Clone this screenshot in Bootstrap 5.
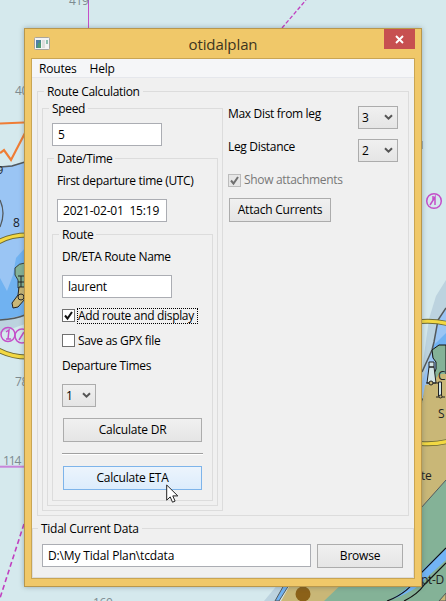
<!DOCTYPE html>
<html lang="en">
<head>
<meta charset="utf-8">
<meta name="viewport" content="width=device-width, initial-scale=1">
<title>otidalplan</title>
<link href="https://cdn.jsdelivr.net/npm/bootstrap@5.3.0/dist/css/bootstrap.min.css" rel="stylesheet">
<style>
html, body { height: 601px; overflow: hidden; }
body { background: #d5e9ed; font-family: "Open Sans", "Noto Sans", sans-serif; font-size: 12px; line-height: 16px; color: #000; letter-spacing: -.32px; }
.chart { position: absolute; left: 0; top: 0; }
.win { width: 398px; height: 559px; margin: 28px 0 0 24px; background: #f0c869; border: 1px solid #b8974c; box-shadow: 0 0 5px rgba(60,80,90,.4); }
.title-bar { height: 29px; padding-left: 9px; }
.title-text { font-size: 15px; line-height: 20px; color: #3d3520; letter-spacing: -.1px; margin-top: 5px; padding-left: 12px; }
.close-btn { width: 31px; height: 20px; background: #c75050; border: 0; border-radius: 0; padding: 0; margin-right: 6px; display: block; }
.client { margin: 0 6px; height: 521px; border: 1px solid #c9a553; background: #f0f0f0; }
.menu-strip { height: 19px; background: #f5f6f8; border-bottom: 1px solid #e5e7ec; padding-left: 7px; letter-spacing: -.2px; }
.menu-strip .nav-link { color: #000; padding: 0; line-height: 20px; margin-right: 13px; }
.group { border: 1px solid #dcdcdc; }
.group > .cap { display: block; width: max-content; height: 16px; margin: -8px 0 0 6px; padding: 0 3px; background: #f0f0f0; white-space: nowrap; }
.g-calc { margin: 13px 0 0 5px; width: 372px; height: 425px; }
.g-speed { width: 181px; height: 403px; margin: 8px 0 0 4px; }
.g-date { width: 171px; height: 348px; margin: 12px 0 0 4px; }
.g-route { width: 161px; height: 267px; margin: 12px 0 0 4px; }
.g-tidal { width: 382px; height: 50px; margin-top: 12px; }
.field { width: 110px; height: 23px; border: 1px solid #abadb3; border-radius: 0; background: #fff; color: #000; font-size: 12px; line-height: 16px; padding: 0 5px 1px; letter-spacing: -.2px; }
.push-btn, .drop { border: 1px solid #acacac; border-radius: 0; background: linear-gradient(#f0f0f0, #e5e5e5); color: #000; font-size: 12px; line-height: 16px; padding: 0; letter-spacing: -.22px; }
.push-btn { height: 24px; display: block; }
.push-btn.hot, .push-btn.hot:hover { border-color: #7eb4ea; background: linear-gradient(#ecf4fc, #dcecfc); }
.drop { width: 40px; height: 23px; padding: 0 4px 0 3px; }
.tick { width: 13px; height: 13px; border: 1px solid #707070; background: #fff; flex: none; }
.tick svg { display: block; }
.tick.off { border-color: #bcbcbc; background: #e6e6e6; }
.lbl { height: 16px; white-space: nowrap; }
.focus { border: 1px dotted #000; width: 121px; height: 16px; line-height: 14px; margin-left: 2px; white-space: nowrap; }
.sep { height: 2px; border-top: 1px solid #a0a0a0; border-bottom: 1px solid #fff; width: 141px; margin-top: 11px; }
.pointer { position: absolute; left: 166px; top: 484px; }
.in-speed { margin: 6px 0 0 9px; }
.l-first { margin: 6px 0 0 9px; }
.in-date { margin: 10px 0 0 9px; }
.route-body { padding: 6px 0 0 9px; }
.in-name { margin-top: 10px; }
.row-add { margin-top: 9px; height: 17px; }
.row-gpx { margin-top: 8px; height: 17px; }
.l-gpx { padding-left: 3px; }
.l-dep { margin-top: 9px; }
.drop-sm { width: 34px; margin-top: 10px; }
.b-dr, .b-eta { width: 139px; margin: 11px 0 0 1px; }
.side { width: 170px; margin: 6px 0 0 5px; }
.row-leg { margin-top: 10px; }
.row-show { margin-top: 10px; height: 16px; color: #787878; }
.l-show { padding-left: 3px; }
.b-attach { width: 102px; margin: 10px 0 0 1px; }
.group > .cap-tidal { margin-left: 5px; letter-spacing: -.26px; }
.path-row { padding: 7px 0 0 9px; }
.in-path { width: 269px; letter-spacing: -.15px; }
.b-browse { width: 86px; margin-left: 6px; }
</style>
<script src="https://cdn.jsdelivr.net/npm/bootstrap@5.3.0/dist/js/bootstrap.bundle.min.js"></script>
</head>
<body>
<svg class="chart" width="446" height="601" font-family="Open Sans, sans-serif" font-size="12" fill="none">
  <path d="M88.500 0V30" stroke="#c44fc8"/>
  <text x="69" y="5" fill="#7d8b90">419</text><text x="15" y="95" fill="#7d8b90">40</text>
  <text x="15" y="386" fill="#7d8b90">78</text><text x="3" y="465" fill="#7d8b90" textLength="18">114</text><text x="93" y="607" fill="#7d8b90">160</text>
  <path d="M282 28L306 0" stroke="#c040c0" stroke-width="1.300" stroke-dasharray="4 2"/>
  <path d="M0 123.500L24 122.500" stroke="#ef7d35" stroke-width="1.800"/>
  <path d="M0 153l4-3 7 10 14-27" stroke="#ef7d35" stroke-width="2.200"/>
  <path d="M0 167l12-2 13-3V317L0 321z" fill="#9ac5f4"/>
  <path d="M0 167l12-1 13-4" stroke="#53595c" stroke-width="1.500"/>
  <text x="-3" y="174" fill="#222" font-size="11">9</text>
  <path d="M0 200q6 13 0 27" stroke="#53595c" stroke-width="1.300"/>
  <text x="13" y="227" fill="#182028" font-size="12">8</text>
  <path d="M0 278l7 13 6-16 3-17 9-10v68l-25 4z" fill="#70b2f1"/>
  <path d="M0 320l25-5v9l-25 9z" fill="#bcd3df"/>
  <path d="M0 320q16-1 25-5" stroke="#53595c" stroke-width="1.500"/>
  <path d="M25 263q-6 0-10 5v7l3 5v8h7z" fill="#84b297" stroke="#222" stroke-width=".8"/>
  <path d="M19 287h6v12l-7 8-5 1-1-5 6-8z" fill="#c9b777" stroke="#222"/>
  <path d="M18 276h7M18 282h7M21 276v11" stroke="#222"/><circle cx="21" cy="297" r="3" stroke="#222"/>
  <circle cx="27" cy="296" r="61" stroke="#6e6a35" stroke-width="5"/><circle cx="27" cy="296" r="61" stroke="#f2d843" stroke-width="3.200"/>
  <g stroke="#c44fc8" stroke-width="1.500"><circle cx="8" cy="334.500" r="7"/><circle cx="22" cy="336" r="7"/><path d="M6 332l3-2-1 9M6 339h5M19 340l5-8"/></g>
  <path d="M0 466.700h25" stroke="#c985da" stroke-width="2"/>
  <path d="M24 524L0 598" stroke="#c040c0" stroke-width="1.600" stroke-dasharray="5 3"/>

  <path d="M422 141v8" stroke="#9fb0b5" stroke-width="2"/>
  <g stroke="#c44fc8" stroke-width="1.500"><circle cx="434" cy="201" r="7.300"/><path d="M430 205l5-8v8M433 196v4"/></g>
  <path d="M446 280l-10 16-7 23-8 58v20h25z" fill="#bcd3df"/>
  <path d="M446 308l-8 12-4 22-12 40v30h24z" fill="#9ac5f4"/>
  <path d="M446 333l-14 14v10h14z" fill="#70b2f1"/>
  <path d="M446 308l-8 12-4 22-2 8-10 22" stroke="#53595c" stroke-width="1.500"/>
  <path d="M446 345h-7l-7 5 1 8 3 4v7l-5 12-10 22h25z" fill="#84b297" stroke="#111"/>
  <path d="M446 374h-7l-7 10-7 1-3 18v105l24-28z" fill="#c9b777"/>
  <path d="M446 480l-25 28v36l-37 42-15 15h77z" fill="#84b297"/>
  <path d="M446 480l-25 28" stroke="#53595c"/>
  <path d="M288 601l20-24h92l-60 10-15 14z" fill="#c9b777"/>
  <path d="M308 580h34l-17 21h-37z" fill="#c9b777"/><path d="M346 580h75v10l-20 11h-77z" fill="#84b297"/>
  <path d="M264 601l15-18h11l-15 18z" fill="#bcd3df"/><path d="M275 601l9-16h5l-10 16z" fill="#70b2f1" stroke="#53595c"/>
  <path d="M281 601l9-16h20v16z" fill="#c9b777"/>
  <path d="M388 601q28-10 35-20l23-21v-12l-25 23q-15 22-34 30z" fill="#72b4f5"/>
  <path d="M404 601q14-7 20-16l22-22M387 601q22-8 34-28l25-25" stroke="#111" stroke-width="1.200"/>
  <path d="M439 601l7-8v8z" fill="#c9b777" stroke="#53595c"/>
  <circle cx="303" cy="594" r="7.500" fill="#8b6118"/>
  <g stroke="#6e6a35" stroke-width="5"><path d="M421 321.500q14-1 26 2M421 443.500q14 1 26-2"/></g>
  <g stroke="#f2d843" stroke-width="3.200"><path d="M421 321.500q14-1 26 2M421 443.500q14 1 26-2"/></g>
  <g stroke="#222"><path d="M429 362h5v5h-5zM429 367h5l2 16h-9z" fill="#d3e5e6"/><path d="M426 383h13"/><circle cx="431" cy="383" r="2" fill="#c9b777"/><path d="M438.500 382h3v14h-3z" fill="#d3e5e6"/><path d="M436 397h9"/><circle cx="440.500" cy="396.500" r="1.500" fill="#c9b777"/></g>
  <g fill="#222" font-size="12"><text x="438" y="380">C</text><text x="438" y="418">S</text><text x="421" y="480">te</text><text x="421" y="584">pt-D</text></g>
</svg>

<main class="win position-relative">
  <header class="title-bar d-flex align-items-start">
    <svg class="mt-2" width="16" height="13" viewBox="0 0 16 13"><rect x=".5" y=".5" width="15" height="12" rx="1" fill="#f4f4f4" stroke="#a9a59c"/><path d="M2 3h5v8H2z" fill="#4a8a8c"/><path d="M2 3h3v5H2z" fill="#4d7fa8"/><path d="M4 6h3v5H4z" fill="#4f9b73"/><path d="M8 3h3v8H8z" fill="#dedede"/><path d="M12 3h2v4h-2z" fill="#8cc0b0"/></svg>
    <div class="title-text flex-grow-1 text-center">otidalplan</div>
    <button class="btn close-btn" aria-label="Close"><svg class="d-block mx-auto" width="9" height="9" viewBox="0 0 9 9"><path d="M1 1l7 7M8 1l-7 7" stroke="#fff" stroke-width="1.900"/></svg></button>
  </header>
  <div class="client">
    <nav class="menu-strip nav"><a class="nav-link">Routes</a><a class="nav-link">Help</a></nav>

    <section class="group g-calc"><span class="cap">Route Calculation</span>
      <div class="d-flex">
        <div>
          <section class="group g-speed"><span class="cap">Speed</span>
            <input class="field d-block in-speed" value="5" aria-label="Speed">
            <section class="group g-date"><span class="cap">Date/Time</span>
              <div class="lbl l-first">First departure time (UTC)</div>
              <input class="field d-block in-date" value="2021-02-01&nbsp; 15:19" aria-label="First departure time">
              <section class="group g-route"><span class="cap">Route</span>
                <div class="route-body">
                  <div class="lbl">DR/ETA Route Name</div>
                  <input class="field d-block in-name" value="laurent" aria-label="Route name">
                  <div class="d-flex align-items-center row-add"><span class="tick"><svg width="11" height="11"><path d="M2 5.500l2.500 3L9 2" fill="none" stroke="#111" stroke-width="2"/></svg></span><span class="focus">Add route and display</span></div>
                  <div class="d-flex align-items-center row-gpx"><span class="tick"></span><span class="lbl l-gpx">Save as GPX file</span></div>
                  <div class="lbl l-dep">Departure Times</div>
                  <div class="drop drop-sm d-flex align-items-center justify-content-between"><span>1</span><svg width="9" height="7"><path d="M1 1.200l3.500 3.500L8 1.200" fill="none" stroke="#555" stroke-width="2"/></svg></div>
                  <button class="btn push-btn b-dr">Calculate DR</button>
                  <div class="sep"></div>
                  <button class="btn push-btn hot b-eta">Calculate ETA</button>
                </div>
              </section>
            </section>
          </section>
        </div>
        <div class="side">
          <div class="d-flex justify-content-between"><span class="lbl">Max Dist from leg</span><div class="drop d-flex align-items-center justify-content-between"><span>3</span><svg width="9" height="7"><path d="M1 1.200l3.500 3.500L8 1.200" fill="none" stroke="#555" stroke-width="2"/></svg></div></div>
          <div class="d-flex justify-content-between row-leg"><span class="lbl">Leg Distance</span><div class="drop d-flex align-items-center justify-content-between"><span>2</span><svg width="9" height="7"><path d="M1 1.200l3.500 3.500L8 1.200" fill="none" stroke="#555" stroke-width="2"/></svg></div></div>
          <div class="d-flex align-items-center row-show"><span class="tick off"><svg width="11" height="11"><path d="M2 5.500l2.500 3L9 2" fill="none" stroke="#707070" stroke-width="2"/></svg></span><span class="lbl l-show">Show attachments</span></div>
          <button class="btn push-btn b-attach">Attach Currents</button>
        </div>
      </div>
    </section>

    <section class="group g-tidal"><span class="cap cap-tidal">Tidal Current Data</span>
      <div class="d-flex path-row"><input class="field in-path" value="D:\My Tidal Plan\tcdata" aria-label="Data folder"><button class="btn push-btn b-browse">Browse</button></div>
    </section>
  </div>
</main>
<svg class="pointer" width="13" height="20" viewBox="0 0 13 20"><path d="M.7 1v15.200l3.500-3.300 2.300 5.300 2.600-1.100-2.300-5.200h5z" fill="#fff" stroke="#222" stroke-width="1"/></svg>
</body>
</html>
